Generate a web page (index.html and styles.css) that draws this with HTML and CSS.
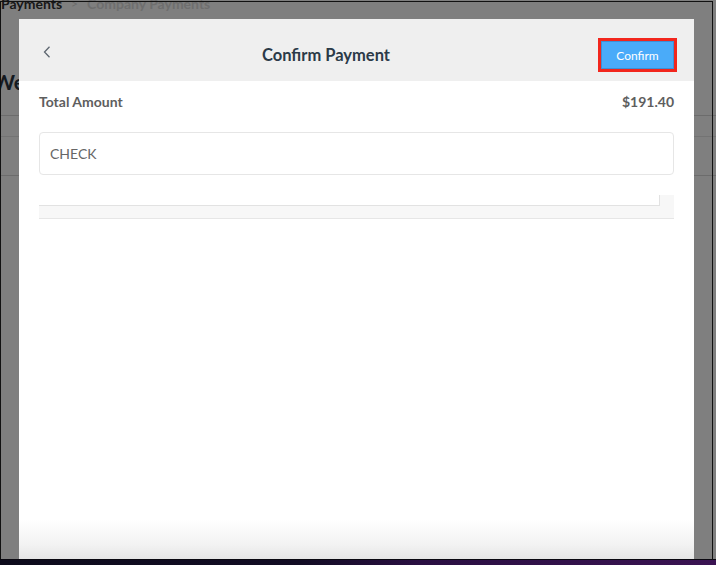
FILE: index.html
```html
<!DOCTYPE html>
<html>
<head>
<meta charset="utf-8">
<link rel="stylesheet" href="styles.css">
</head>
<body>
<div class="screen">
  <div class="page">
    <div class="crumbs"><span class="crumb-main">Payments</span><span class="crumb-sep">&gt;</span><span class="crumb-sub">Company Payments</span></div>
    <h1 class="page-title">Weekly Payments</h1>
    <div class="rule rule-b"></div>
    <div class="rule rule-c"></div>
    <div class="rule rule-d"></div>
  </div>
  <div class="overlay"></div>
  <div class="modal">
    <div class="modal-head">
      <button class="back" aria-label="Back">
        <svg width="8" height="12" viewBox="0 0 8 12"><path d="M6.5 0.8 L1.5 6 L6.5 11.2" fill="none" stroke="#5d6670" stroke-width="1.3"/></svg>
      </button>
      <div class="modal-title">Confirm Payment</div>
      <button class="confirm">Confirm</button>
    </div>
    <div class="modal-body">
      <div class="total-row"><span>Total Amount</span><span>$191.40</span></div>
      <div class="method">CHECK</div>
      <div class="scroller"><div class="scroller-inner"></div></div>
    </div>
  </div>
  <div class="frame"></div>
  <div class="taskbar"></div>
</div>
</body>
</html>
```
FILE: styles.css
```css
html, body {
  margin: 0;
  padding: 0;
}
body {
  width: 716px;
  height: 565px;
  overflow: hidden;
  font-family: Lato, "Liberation Sans", sans-serif;
  background: #ffffff;
}
.screen {
  position: relative;
  width: 716px;
  height: 565px;
  overflow: hidden;
}
.page {
  background: #ffffff;
  height: 565px;
  display: flex;
  flex-direction: column;
}
.crumbs {
  display: flex;
  align-items: center;
  gap: 9px;
  margin-top: -7px;
  height: 20px;
  font-size: 14px;
  padding-left: 1px;
}
.crumb-main {
  color: #333333;
  font-weight: 700;
}
.crumb-sep {
  color: #d8d8d8;
  font-size: 12px;
}
.crumb-sub {
  color: #dcdcdc;
  font-weight: 700;
}
.rule {
  height: 1px;
  background: #d8d8d8;
  flex: none;
}
.page-title {
  margin: 55px 0 0 -7px;
  height: 28px;
  font-size: 21px;
  font-weight: 700;
  color: #2a3440;
  line-height: 28px;
  white-space: nowrap;
}
.rule-b {
  margin-top: 19px;
}
.rule-c {
  margin-top: 20px;
  background: #e6e6e6;
}
.rule-d {
  margin-top: 38px;
}
.overlay {
  position: absolute;
  inset: 0;
  background: rgba(0, 0, 0, 0.5);
}
.modal {
  position: absolute;
  left: 19px;
  top: 19px;
  width: 675px;
  height: 541px;
  background: linear-gradient(to bottom, #ffffff 0, #ffffff 500px, #f3f3f3 525px, #e4e4e4 541px);
  display: flex;
  flex-direction: column;
}
.modal-head {
  height: 62px;
  box-sizing: border-box;
  padding: 19px 17px 9px 20px;
  background: #efefef;
  display: flex;
  align-items: center;
}
.back {
  width: 15px;
  height: 34px;
  padding: 0 0 0 4px;
  margin: 0;
  border: 0;
  background: none;
  display: flex;
  align-items: center;
  justify-content: flex-start;
  margin-top: -7px;
}
.modal-title {
  flex: 1;
  text-align: center;
  font-size: 16.5px;
  font-weight: 700;
  color: #2b3a48;
}
.confirm {
  width: 79px;
  height: 34px;
  box-sizing: border-box;
  border: 3px solid #f2261d;
  box-shadow: inset 0 0 0 1px #3d8fd6;
  background: #4aabf9;
  color: #ffffff;
  font-family: Lato, "Liberation Sans", sans-serif;
  font-size: 12px;
  padding: 0;
  margin: 0;
}
.modal-body {
  padding: 11px 20px 0 20px;
  display: flex;
  flex-direction: column;
}
.total-row {
  display: flex;
  justify-content: space-between;
  font-size: 14px;
  font-weight: 700;
  color: #5e5e5e;
  line-height: 20px;
}
.method {
  margin-top: 20px;
  height: 43px;
  box-sizing: border-box;
  border: 1px solid #e6e6e6;
  border-radius: 4px;
  padding-left: 10px;
  display: flex;
  align-items: center;
  font-size: 14px;
  color: #666666;
}
.scroller {
  margin-top: 20px;
  height: 24px;
  box-sizing: border-box;
  background: #f7f7f7;
  border-bottom: 1px solid #e6e6e6;
}
.scroller-inner {
  width: 620px;
  height: 10px;
  background: #ffffff;
  border-bottom: 1px solid #e2e2e2;
  border-right: 1px solid #e2e2e2;
}
.frame {
  position: absolute;
  left: 0;
  top: 1px;
  width: 713px;
  height: 558px;
  box-sizing: border-box;
  border-left: 1px solid #111111;
  border-top: 1px solid #111111;
  border-right: 1px solid #111111;
}
.taskbar {
  position: absolute;
  left: 0;
  right: 0;
  top: 559px;
  height: 6px;
  border-top: 1px solid #0a0810;
  background: linear-gradient(to right, #0d0b1c 0, #120c24 300px, #2a0f42 420px, #3a1352 716px);
}
```
